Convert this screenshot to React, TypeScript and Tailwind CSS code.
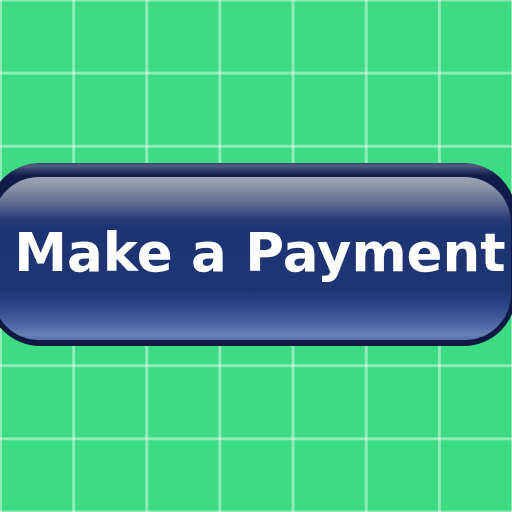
export default function App() {
  return (
    <div className="w-[512px] h-[512px] overflow-hidden bg-[#3ddb83] bg-[linear-gradient(90deg,rgba(255,255,255,0.42)_0px,rgba(255,255,255,0.42)_3px,transparent_3px),linear-gradient(180deg,rgba(255,255,255,0.42)_0px,rgba(255,255,255,0.42)_3px,transparent_3px)] bg-size-[73.142857px_73.142857px] bg-position-[-1px_-1.5px] pt-[163px]">
      <div className="ml-[-12px] w-[528px] h-[183px] rounded-[52px] flex flex-col pt-[14px] px-[5px] pb-[6px] bg-[linear-gradient(180deg,#3d4870_0px,#525d80_3px,#2a3560_8px,#111d48_13px,#0f1b45_100%)]">
        <div className="flex-1 rounded-[46px] flex items-center justify-center pb-[12px] bg-[linear-gradient(180deg,#9ea4b5_0px,#8b93a9_10px,#5a6690_28px,#2a3c78_42px,#1d3372_50px,#1e3473_112px,#2c4384_128px,#4a62a0_145px,#6a80b8_158px,#5a70aa_163px)]">
          <span
            className="text-white text-[53px] font-bold leading-none pl-[16px] whitespace-nowrap"
            style={{ fontFamily: '"DejaVu Sans", sans-serif' }}
          >
            Make a Payment
          </span>
        </div>
      </div>
    </div>
  );
}
